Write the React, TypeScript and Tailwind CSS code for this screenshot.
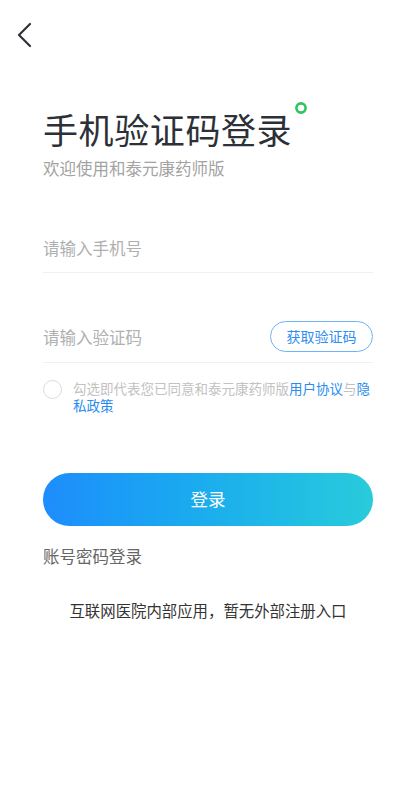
import React from "react";

export default function App() {
  return (
    <div
      className="w-[419px] min-h-[810px] bg-white"
      style={{ fontFamily: '"Noto Sans CJK SC", "Noto Sans", sans-serif' }}
    >
      <div className="h-[68px] pl-[16px] pt-[22px]">
        <svg width="16" height="26" viewBox="0 0 16 26" fill="none">
          <path d="M14 2 L3 13 L14 24" stroke="#2f3238" strokeWidth="2.2" strokeLinecap="round" strokeLinejoin="round" />
        </svg>
      </div>
      <div className="pl-[43px] pr-[46px]">
        <div className="mt-[41px] relative inline-block">
          <h1 className="text-[35px] leading-[40px] tracking-[0.6px] text-[#2d3137] font-normal">手机验证码登录</h1>
          <svg className="absolute right-[-16px] top-[-8px]" width="14" height="14" viewBox="0 0 14 14">
            <circle cx="7" cy="7" r="4.6" stroke="#2cc45b" strokeWidth="2.6" fill="none" />
          </svg>
        </div>
        <p className="mt-[8px] text-[16.5px] leading-[22px] text-[#a3a3a3]">欢迎使用和泰元康药师版</p>

        <div className="mt-[58px] pb-[13px] border-b border-[#f0f0f0]">
          <span className="block text-[16.5px] leading-[22px] text-[#b0b0b0]">请输入手机号</span>
        </div>

        <div className="mt-[48px] pb-[10px] border-b border-[#f0f0f0] flex items-center justify-between">
          <span className="text-[16.5px] leading-[22px] text-[#b0b0b0]">请输入验证码</span>
          <button className="w-[103px] h-[31px] rounded-full border border-[#6fb3f6] text-[14px] text-[#2f8ef0] flex items-center justify-center">
            获取验证码
          </button>
        </div>

        <div className="mt-[17px] flex items-start">
          <div className="w-[19px] h-[19px] rounded-full border border-[#dcdcdc] shrink-0" />
          <p className="ml-[11px] text-[13.5px] leading-[17px] text-[#c2c2c2]">
            勾选即代表您已同意和泰元康药师版<span className="text-[#2a8cf0]">用户协议</span>与<span className="text-[#2a8cf0]">隐私政策</span>
          </p>
        </div>

        <button className="mt-[59px] w-full h-[53px] rounded-full bg-gradient-to-r from-[#1e8dfc] to-[#29cbdb] text-white text-[17.5px] flex items-center justify-center">
          登录
        </button>

        <p className="mt-[19px] text-[16.5px] leading-[22px] text-[#666666]">账号密码登录</p>

        <p className="mt-[32px] text-[15.4px] leading-[22px] text-[#333333] text-center">互联网医院内部应用，暂无外部注册入口</p>
      </div>
    </div>
  );
}
